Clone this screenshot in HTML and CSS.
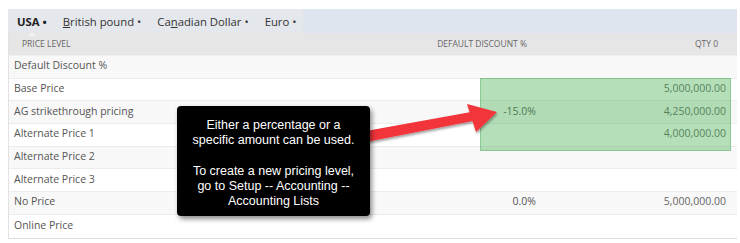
FILE: index.html
```html
<!DOCTYPE html>
<html lang="en">
<head>
  <meta charset="UTF-8">
  <title>Pricing</title>
  <link rel="stylesheet" href="styles.css">
</head>
<body>
  <div class="frame">
    <!-- Currency tabs -->
    <div class="tabbar">
      <div class="tabs">
        <span class="tab active">USA •</span>
        <span class="tab"><u>B</u>ritish pound •</span>
        <span class="tab">Ca<u>n</u>adian Dollar •</span>
        <span class="tab">Euro •</span>
      </div>
    </div>

    <!-- Price table -->
    <div class="table">
      <div class="row head">
        <div class="cell label">PRICE LEVEL</div>
        <div class="cell disc">DEFAULT DISCOUNT %</div>
        <div class="cell qty">QTY 0</div>
      </div>
      <div class="row odd"><div class="cell label">Default Discount %</div><div class="cell disc"></div><div class="cell qty"></div></div>
      <div class="row"><div class="cell label">Base Price</div><div class="cell disc"></div><div class="cell qty">5,000,000.00</div></div>
      <div class="row odd"><div class="cell label">AG strikethrough pricing</div><div class="cell disc">-15.0%</div><div class="cell qty">4,250,000.00</div></div>
      <div class="row"><div class="cell label">Alternate Price 1</div><div class="cell disc"></div><div class="cell qty">4,000,000.00</div></div>
      <div class="row odd"><div class="cell label">Alternate Price 2</div><div class="cell disc"></div><div class="cell qty"></div></div>
      <div class="row"><div class="cell label">Alternate Price 3</div><div class="cell disc"></div><div class="cell qty"></div></div>
      <div class="row odd"><div class="cell label">No Price</div><div class="cell disc">0.0%</div><div class="cell qty">5,000,000.00</div></div>
      <div class="row"><div class="cell label">Online Price</div><div class="cell disc"></div><div class="cell qty"></div></div>
    </div>
  </div>

  <!-- Annotations -->
  <div class="highlight"></div>
  <svg class="arrow" width="740" height="243" viewBox="0 0 740 243">
    <defs>
      <filter id="sh" x="-10%" y="-30%" width="130%" height="160%">
        <feDropShadow dx="1" dy="2" stdDeviation="1.2" flood-color="#000" flood-opacity="0.35"/>
      </filter>
    </defs>
    <g filter="url(#sh)" fill="#f2343a">
      <polygon points="366,131 471,112 473,121 366,142"/>
      <polygon points="467,104 497,112 476,132"/>
    </g>
  </svg>
  <div class="callout">
    <p>Either a percentage or a<br>specific amount can be used.</p>
    <p>To create a new pricing level,<br>go to Setup -- Accounting --<br>Accounting Lists</p>
  </div>
</body>
</html>
```
FILE: styles.css
```css
/* Base */
body {
  margin: 0;
  padding: 0;
  background: #fff;
  font-family: "Open Sans", Arial, sans-serif;
  color: #555;
}
.frame {
  margin: 9px 3px 0 8px;
}
/* Tabs */
.tabbar {
  height: 24px;
  background-color: #dee5ee;
  display: flex;
}
.tabs {
  display: flex;
  width: 286px;
  padding-left: 9px;
  gap: 16px;
  align-items: center;
  background-color: #e4e7eb;
  font-size: 11.3px;
  color: #333;
}
.tab {
  position: relative;
  white-space: nowrap;
}
.tab.active {
  font-weight: bold;
  color: #222;
}
.tab.active::after {
  content: "";
  position: absolute;
  left: 10px;
  bottom: -7px;
  border-left: 5px solid transparent;
  border-right: 5px solid transparent;
  border-bottom: 4px solid #eef0f3;
}
/* Table */
.table {
  border-left: 1px solid #e2e2e2;
  border-bottom: 1px solid #dcdcdc;
}
.row {
  display: grid;
  grid-template-columns: 1fr 80px 191px;
  height: 22.7px;
  box-sizing: border-box;
  padding-bottom: 3px;
  border-bottom: 1px solid #ececec;
  font-size: 10.5px;
  background: #fff;
}
.row.odd {
  background: #f8f8f8;
}
.row:last-child {
  border-bottom: none;
}
.row.head {
  height: 23px;
  padding-bottom: 1px;
  background: #e6e6e6;
  border-bottom: 1px solid #f0f0f0;
  font-size: 8.5px;
  color: #666;
}
.cell {
  display: flex;
  align-items: center;
  white-space: nowrap;
}
.cell.label {
  padding-left: 5px;
}
.head .cell.label {
  padding-left: 13px;
}
.cell.disc {
  justify-content: flex-end;
  padding-right: 10px;
}
.head .cell.disc {
  padding-right: 19px;
}
.cell.qty {
  justify-content: flex-end;
  padding-right: 11px;
  color: #666;
}
.head .cell.qty {
  padding-right: 19px;
}
/* Annotations */
.highlight {
  position: absolute;
  left: 480px;
  top: 78px;
  width: 249px;
  height: 71px;
  background: rgba(70, 175, 80, 0.4);
  border: 1px solid rgba(70, 160, 80, 0.35);
}
.arrow {
  position: absolute;
  left: 0;
  top: 0;
}
.callout {
  position: absolute;
  left: 177px;
  top: 106px;
  width: 193px;
  height: 110px;
  box-sizing: border-box;
  padding-top: 12px;
  background: #000;
  border-radius: 4px;
  box-shadow: 2px 3px 5px rgba(0, 0, 0, 0.45);
  color: #fff;
  font-family: "Liberation Sans", Arial, sans-serif;
  font-size: 12.5px;
  line-height: 15px;
  text-align: center;
}
.callout p {
  margin: 0 0 16px;
}
```
